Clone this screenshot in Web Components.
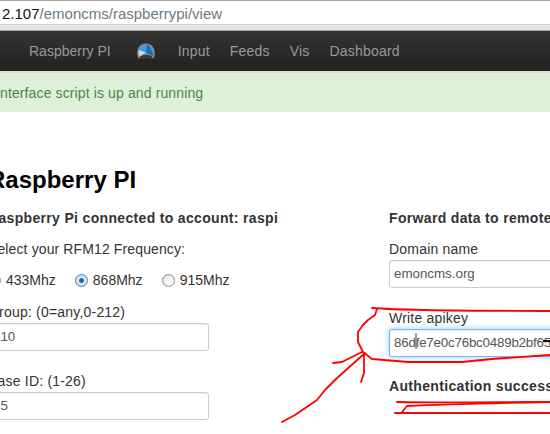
<!DOCTYPE html>
<html>
<head>
<meta charset="utf-8">
<title>Raspberry PI</title>
<style>
  html, body { margin: 0; padding: 0; height: 100%; overflow: hidden; background: #fff; }
  body { font-family: "Liberation Sans", Arial, sans-serif; color: #333; }
</style>
</head>
<body>
<app-page>
  <url-bar host="2.107" path="/emoncms/raspberrypi/view"></url-bar>
  <top-nav>
    <nav-link style="letter-spacing:0">Raspberry PI</nav-link>
    <nav-link icon></nav-link>
    <nav-link>Input</nav-link>
    <nav-link>Feeds</nav-link>
    <nav-link>Vis</nav-link>
    <nav-link>Dashboard</nav-link>
  </top-nav>
  <alert-box>Interface script is up and running</alert-box>
  <page-title>Raspberry PI</page-title>
  <two-cols>
    <div slot="left">
      <col-heading>Raspberry Pi connected to account: raspi</col-heading>
      <field-label style="margin-top:11px">Select your RFM12 Frequency:</field-label>
      <radio-row>
        <radio-opt>433Mhz</radio-opt>
        <radio-opt checked>868Mhz</radio-opt>
        <radio-opt>915Mhz</radio-opt>
      </radio-row>
      <form-field label="Group: (0=any,0-212)" value="210" width="221" style="margin-top:12px"></form-field>
      <form-field label="Base ID: (1-26)" value="15" width="221" style="margin-top:20px"></form-field>
    </div>
    <div slot="right">
      <col-heading>Forward data to remote server</col-heading>
      <form-field label="Domain name" value="emoncms.org" width="220" style="margin-top:11px"></form-field>
      <form-field label="Write apikey" value="86dfe7e0c76bc0489b2bf65577f3a2c1" width="220" focused style="margin-top:20px"></form-field>
      <col-heading style="margin-top:19px">Authentication successful</col-heading>
    </div>
  </two-cols>
  <ink-marks></ink-marks>
</app-page>

<script>
class AppPage extends HTMLElement {
  constructor() {
    super();
    this.attachShadow({ mode: 'open' });
    this.shadowRoot.innerHTML = `
      <style>
        :host { display: flex; flex-direction: column; position: relative; width: 550px; height: 434px; overflow: hidden; }
      </style>
      <slot></slot>`;
  }
}

class UrlBar extends HTMLElement {
  constructor() {
    super();
    this.attachShadow({ mode: 'open' });
  }
  connectedCallback() {
    this.shadowRoot.innerHTML = `
      <style>
        :host { display: block; flex: none; }
        .field { height: 23px; background: #fff; border-top: 1px solid #a9a9a9; padding-left: 2px;
                 font-size: 15px; line-height: 25px; color: #6d7a84; white-space: nowrap; }
        b { font-weight: normal; color: #111; }
        .edge { height: 5px; background: #e4e4e4; border-top: 1px solid #cfcfcf; }
        .line { height: 1px; background: #a8a8a8; }
      </style>
      <div class="field"><b>${this.getAttribute('host')}</b>${this.getAttribute('path')}</div>
      <div class="edge"></div>
      <div class="line"></div>`;
  }
}

class TopNav extends HTMLElement {
  constructor() {
    super();
    this.attachShadow({ mode: 'open' });
    this.shadowRoot.innerHTML = `
      <style>
        :host { display: flex; flex: none; height: 40px; padding-left: 19px; align-items: center;
                background: linear-gradient(#333, #222); border-bottom: 2px solid #ddd; }
      </style>
      <slot></slot>`;
  }
}

class NavLink extends HTMLElement {
  constructor() {
    super();
    this.attachShadow({ mode: 'open' });
  }
  connectedCallback() {
    const gauge = `
      <svg width="20" height="17" viewBox="0 0 20 17">
        <path d="M2.500 16 C-1 8 3 .5 10 .5 C17 .5 21 8 17.500 16 L15 13 C12 11.500 8 11.500 5 13 Z" fill="#8a8a8a"/>
        <path d="M3 13 C1.500 7.500 5 2 10 2 C15 2 18.500 7.500 17 13 L10 9 Z" fill="#3a9bea"/>
        <path d="M2.700 7 L10 9.500 L3.500 13.500 C2.500 11.500 2.300 9 2.700 7 Z" fill="#ccd8e0"/>
        <path d="M11 2 L13.500 2.800 L17.200 11.500 L16.500 13 L10 9.500 Z" fill="#1a6cb5"/>
        <path d="M4.500 15.500 C8 13.500 12 13.500 15.500 15.500" fill="none" stroke="#555" stroke-width="1"/>
      </svg>`;
    this.shadowRoot.innerHTML = `
      <style>
        :host { display: block; padding: 0 10px; font-size: 14px; letter-spacing: .2px; color: #999; }
        :host([icon]) { padding: 0 12px 0 15px; line-height: 0; }
      </style>
      ${this.hasAttribute('icon') ? gauge : '<slot></slot>'}`;
  }
}

class AlertBox extends HTMLElement {
  constructor() {
    super();
    this.attachShadow({ mode: 'open' });
    this.shadowRoot.innerHTML = `
      <style>
        :host { display: block; flex: none; height: 39px; margin-left: -4px;
                background: #dff0d8; color: #468847; font-size: 14px; letter-spacing: .12px; line-height: 40px; white-space: nowrap; }
      </style>
      <slot></slot>`;
  }
}

class PageTitle extends HTMLElement {
  constructor() {
    super();
    this.attachShadow({ mode: 'open' });
    this.shadowRoot.innerHTML = `
      <style>
        :host { display: block; flex: none; margin: 53px 0 0 -12px; font-size: 24px; font-weight: bold;
                line-height: 30px; color: #000; }
      </style>
      <slot></slot>`;
  }
}

class TwoCols extends HTMLElement {
  constructor() {
    super();
    this.attachShadow({ mode: 'open' });
    this.shadowRoot.innerHTML = `
      <style>
        :host { display: grid; grid-template-columns: 401px 220px; flex: none; margin: 13px 0 0 -12px; }
      </style>
      <slot name="left"></slot>
      <slot name="right"></slot>`;
  }
}

class ColHeading extends HTMLElement {
  constructor() {
    super();
    this.attachShadow({ mode: 'open' });
    this.shadowRoot.innerHTML = `
      <style>
        :host { display: block; font-size: 14px; letter-spacing: .33px; font-weight: bold; line-height: 20px; color: #333; white-space: nowrap; }
      </style>
      <slot></slot>`;
  }
}

class FieldLabel extends HTMLElement {
  constructor() {
    super();
    this.attachShadow({ mode: 'open' });
    this.shadowRoot.innerHTML = `
      <style>
        :host { display: block; font-size: 14px; letter-spacing: .12px; line-height: 20px; color: #333; white-space: nowrap; }
      </style>
      <slot></slot>`;
  }
}

class RadioRow extends HTMLElement {
  constructor() {
    super();
    this.attachShadow({ mode: 'open' });
    this.shadowRoot.innerHTML = `
      <style>
        :host { display: flex; gap: 19px; margin-top: 11px; }
      </style>
      <slot></slot>`;
  }
}

class RadioOpt extends HTMLElement {
  constructor() {
    super();
    this.attachShadow({ mode: 'open' });
  }
  connectedCallback() {
    const on = this.hasAttribute('checked');
    this.shadowRoot.innerHTML = `
      <style>
        :host { display: flex; align-items: center; gap: 5px; font-size: 14px; line-height: 20px; color: #333; }
        i { display: block; box-sizing: border-box; width: 13px; height: 13px; border-radius: 50%;
            border: 1px solid #8e8f8f; }
        .off { background: radial-gradient(circle at 60% 65%, #fff 15%, #d4d4d4 95%); }
        .on { border-color: #5f7d99; background: radial-gradient(circle, #0a5a98 0, #1477c0 26%, #dfe8f0 36%, #c4d0dc 100%); }
      </style>
      <i class="${on ? 'on' : 'off'}"></i><slot></slot>`;
  }
}

class FormField extends HTMLElement {
  constructor() {
    super();
    this.attachShadow({ mode: 'open' });
  }
  connectedCallback() {
    const focused = this.hasAttribute('focused');
    this.shadowRoot.innerHTML = `
      <style>
        :host { display: block; }
        label { display: block; font-size: 14px; letter-spacing: .2px; line-height: 20px; color: #333; margin-bottom: 1px; white-space: nowrap; }
        .box { box-sizing: border-box; width: ${this.getAttribute('width')}px; height: 28px; padding: 0 4px;
               border: 1px solid #ccc; border-radius: 3px; background: #fff; color: #555;
               font-size: 13.333px; line-height: 26px; white-space: nowrap; overflow: hidden;
               box-shadow: inset 0 1px 1px rgba(0,0,0,.075); }
        .focus { border-color: rgba(82,168,236,.8); letter-spacing: -.2px;
                 box-shadow: inset 0 1px 1px rgba(0,0,0,.075), 0 0 6px rgba(82,168,236,.6); }
      </style>
      <label>${this.getAttribute('label')}</label>
      <div class="box ${focused ? 'focus' : ''}">${this.getAttribute('value')}</div>`;
  }
}

class InkMarks extends HTMLElement {
  constructor() {
    super();
    this.attachShadow({ mode: 'open' });
    this.shadowRoot.innerHTML = `
      <style>
        :host { position: absolute; left: 0; top: 0; width: 550px; height: 434px; pointer-events: none; }
        svg { display: block; }
        path { fill: none; stroke: #f00; stroke-width: 1.800; stroke-linecap: round; stroke-linejoin: round; }
      </style>
      <svg width="550" height="434" viewBox="0 0 550 434">
        <rect x="415" y="333" width="2" height="16" fill="#9a9a9a"/>
        <rect x="543" y="340" width="7" height="2" fill="#111"/>
        <path d="M372 308 C400 310 480 311 550 311"/>
        <path d="M377 309 L375 315 L368 320 L363 325 L358 332 L358 342 L363 352 L372 359 L408 362 L462 362 L492 359 L550 355"/>
        <path d="M333 363 L342 362 L362 352"/>
        <path d="M364 355 L364 373 L361 382"/>
        <path d="M365 353 L337 378 L325 390 L317 400 L295 415 L282 422"/>
        <path d="M397 402 C450 403 500 402 550 402"/>
        <path d="M395 413 C450 413 500 413 550 413"/>
        <path d="M402 412 L407 406 C450 404 500 403 550 402"/>
      </svg>`;
  }
}

customElements.define('app-page', AppPage);
customElements.define('url-bar', UrlBar);
customElements.define('top-nav', TopNav);
customElements.define('nav-link', NavLink);
customElements.define('alert-box', AlertBox);
customElements.define('page-title', PageTitle);
customElements.define('two-cols', TwoCols);
customElements.define('col-heading', ColHeading);
customElements.define('field-label', FieldLabel);
customElements.define('radio-row', RadioRow);
customElements.define('radio-opt', RadioOpt);
customElements.define('form-field', FormField);
customElements.define('ink-marks', InkMarks);
</script>
</body>
</html>
